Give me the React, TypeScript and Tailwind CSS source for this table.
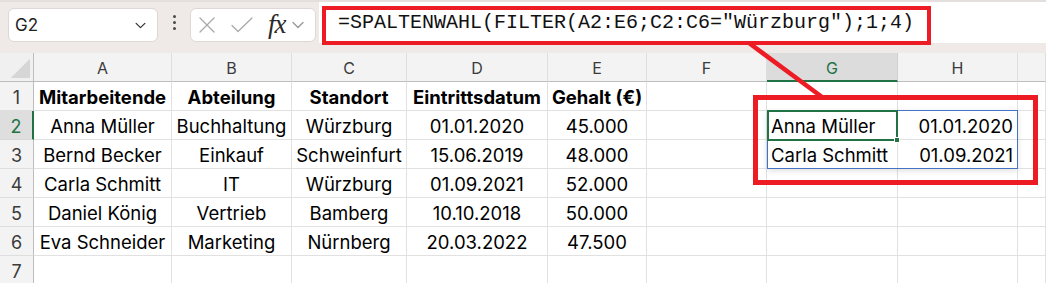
import React from "react";

const COLS = ["A", "B", "C", "D", "E", "F", "G", "H", ""];
const WIDTHS = "34px 138px 120px 115px 141px 99px 120px 131px 120px 1fr";

type Cell = { t: string; align?: "left" | "center" | "right"; bold?: boolean };

const rows: Cell[][] = [
  [
    { t: "Mitarbeitende", bold: true },
    { t: "Abteilung", bold: true },
    { t: "Standort", bold: true },
    { t: "Eintrittsdatum", bold: true },
    { t: "Gehalt (€)", bold: true },
    { t: "" },
    { t: "" },
    { t: "" },
    { t: "" },
  ],
  [
    { t: "Anna Müller" },
    { t: "Buchhaltung" },
    { t: "Würzburg" },
    { t: "01.01.2020" },
    { t: "45.000" },
    { t: "" },
    { t: "Anna Müller", align: "left" },
    { t: "01.01.2020", align: "right" },
    { t: "" },
  ],
  [
    { t: "Bernd Becker" },
    { t: "Einkauf" },
    { t: "Schweinfurt" },
    { t: "15.06.2019" },
    { t: "48.000" },
    { t: "" },
    { t: "Carla Schmitt", align: "left" },
    { t: "01.09.2021", align: "right" },
    { t: "" },
  ],
  [
    { t: "Carla Schmitt" },
    { t: "IT" },
    { t: "Würzburg" },
    { t: "01.09.2021" },
    { t: "52.000" },
    { t: "" },
    { t: "" },
    { t: "" },
    { t: "" },
  ],
  [
    { t: "Daniel König" },
    { t: "Vertrieb" },
    { t: "Bamberg" },
    { t: "10.10.2018" },
    { t: "50.000" },
    { t: "" },
    { t: "" },
    { t: "" },
    { t: "" },
  ],
  [
    { t: "Eva Schneider" },
    { t: "Marketing" },
    { t: "Nürnberg" },
    { t: "20.03.2022" },
    { t: "47.500" },
    { t: "" },
    { t: "" },
    { t: "" },
    { t: "" },
  ],
  Array.from({ length: 9 }, () => ({ t: "" })),
];

function Chevron({ className }: { className?: string }) {
  return (
    <svg viewBox="0 0 12 8" className={className} fill="none">
      <path d="M1 1.5 6 6.5 11 1.5" stroke="currentColor" strokeWidth="1.4" strokeLinecap="round" strokeLinejoin="round" />
    </svg>
  );
}

function Toolbar() {
  return (
    <div className="h-[53px] bg-[#efeae8] border-t-2 border-[#e4dfdd] flex items-start">
      {/* name box */}
      <div className="mt-[6px] ml-[8px] w-[150px] h-[34px] bg-white rounded-[6px] border border-[#ddd7d5] flex items-center justify-between pl-[6px] pr-[11px]">
        <span className="text-[17px] text-[#222] leading-none">G2</span>
        <Chevron className="w-[11px] h-[7px] text-[#333]" />
      </div>
      {/* grip dots */}
      <div className="w-[32px] h-[40px] flex flex-col items-center justify-center gap-[3px]">
        <span className="block w-[3px] h-[3px] rounded-full bg-[#4a4a4a]" />
        <span className="block w-[3px] h-[3px] rounded-full bg-[#4a4a4a]" />
        <span className="block w-[3px] h-[3px] rounded-full bg-[#4a4a4a]" />
      </div>
      {/* cancel / enter / function */}
      <div className="mt-[6px] w-[126px] h-[34px] bg-white rounded-[6px] border border-[#ddd7d5] flex items-center pl-[7px]">
        <svg viewBox="0 0 18 18" className="w-[18px] h-[18px]" fill="none">
          <path d="M2 2 16 16M16 2 2 16" stroke="#a9a9a9" strokeWidth="1.3" strokeLinecap="round" />
        </svg>
        <svg viewBox="0 0 22 16" className="ml-[15px] w-[22px] h-[16px]" fill="none">
          <path d="M1 8.5 7 14.5 21 1" stroke="#a9a9a9" strokeWidth="1.3" strokeLinecap="round" strokeLinejoin="round" />
        </svg>
        <span
          className="ml-[15px] text-[27px] leading-none italic text-[#2a2a2a] tracking-[-1px] -mt-[2px]"
          style={{ fontFamily: '"Liberation Serif", "DejaVu Serif", serif' }}
        >
          fx
        </span>
        <Chevron className="ml-[6px] w-[12px] h-[8px] text-[#9a9a9a]" />
      </div>
      {/* formula input */}
      <div className="ml-[3px] flex-1 h-[41px] bg-white flex items-center">
        <span
          className="ml-[19px] text-[20px] leading-none text-[#111] whitespace-pre"
          style={{ fontFamily: '"Liberation Mono", "DejaVu Sans Mono", monospace' }}
        >
          =SPALTENWAHL(FILTER(A2:E6;C2:C6="Würzburg");1;4)
        </span>
      </div>
    </div>
  );
}

function Grid() {
  return (
    <div className="grid" style={{ gridTemplateColumns: WIDTHS }}>
      {/* column header row */}
      <div className="h-[29px] bg-[#f0f0f0] border-r border-b border-[#bdbdbd] relative overflow-hidden">
        <svg viewBox="0 0 34 29" className="absolute inset-0 w-full h-full">
          <polygon points="31,6 31,26 11,26" fill="#d6d6d6" />
        </svg>
      </div>
      {COLS.map((c, i) =>
        c === "G" ? (
          <div
            key={i}
            className="h-[29px] bg-[#dcdcdc] border-r border-[#d0d0d0] border-b-2 border-b-[#217346] flex items-center justify-center text-[16px] text-[#217346] pt-[2px]"
          >
            {c}
          </div>
        ) : (
          <div
            key={i}
            className="h-[29px] bg-[#f3f3f3] border-r border-[#dedede] border-b border-b-[#bdbdbd] flex items-center justify-center text-[16px] text-[#3b3b3b] pt-[2px]"
          >
            {c}
          </div>
        )
      )}
      {rows.map((r, ri) => (
        <React.Fragment key={ri}>
          <div
            className={
              ri === 1
                ? "h-[29px] bg-[#dedede] border-r-2 border-[#217346] border-b border-b-[#d8d8d8] flex items-center justify-center text-[18px] text-[#217346] pt-[2px]"
                : "h-[29px] bg-[#f3f3f3] border-r border-[#bdbdbd] border-b border-b-[#dedede] flex items-center justify-center text-[18px] text-[#3b3b3b] pt-[2px]"
            }
          >
            {ri + 1}
          </div>
          {r.map((cell, ci) => (
            <div
              key={ci}
              className={
                "h-[29px] border-r border-b border-[#e1e1e1] flex items-center whitespace-nowrap text-[18.5px] text-black pt-[3px] " +
                (cell.align === "left"
                  ? "justify-start pl-[4px]"
                  : cell.align === "right"
                  ? "justify-end pr-[4px]"
                  : "justify-center") +
                (cell.bold ? " font-bold" : "")
              }
            >
              {cell.t}
            </div>
          ))}
        </React.Fragment>
      ))}
    </div>
  );
}

export default function App() {
  return (
    <div
      className="relative w-[1046px] h-[283px] overflow-hidden bg-white"
      style={{ fontFamily: 'Inter, "Liberation Sans", sans-serif' }}
    >
      <Toolbar />
      <Grid />

      {/* spill range G2:H3 */}
      <div className="absolute left-[767px] top-[110px] w-[251px] h-[59px] border border-[#4472c4] shadow-[0_2px_6px_rgba(0,0,0,0.12)]" />
      {/* active cell G2 */}
      <div className="absolute left-[767px] top-[110px] w-[131px] h-[31px] border-2 border-[#217346]" />
      <div className="absolute left-[894px] top-[137px] w-[6px] h-[6px] bg-[#217346] border border-white" />

      {/* annotation */}
      <div className="absolute left-[322px] top-[6px] w-[609px] h-[39px] border-4 border-[#ed1c24]" />
      <div className="absolute left-[753px] top-[95px] w-[285px] h-[90px] border-[5px] border-[#ed1c24]" />
      <svg className="absolute left-0 top-0 w-[1046px] h-[283px] pointer-events-none" viewBox="0 0 1046 283">
        <line x1="749" y1="43" x2="822" y2="97" stroke="#ed1c24" strokeWidth="4.5" />
      </svg>
    </div>
  );
}
